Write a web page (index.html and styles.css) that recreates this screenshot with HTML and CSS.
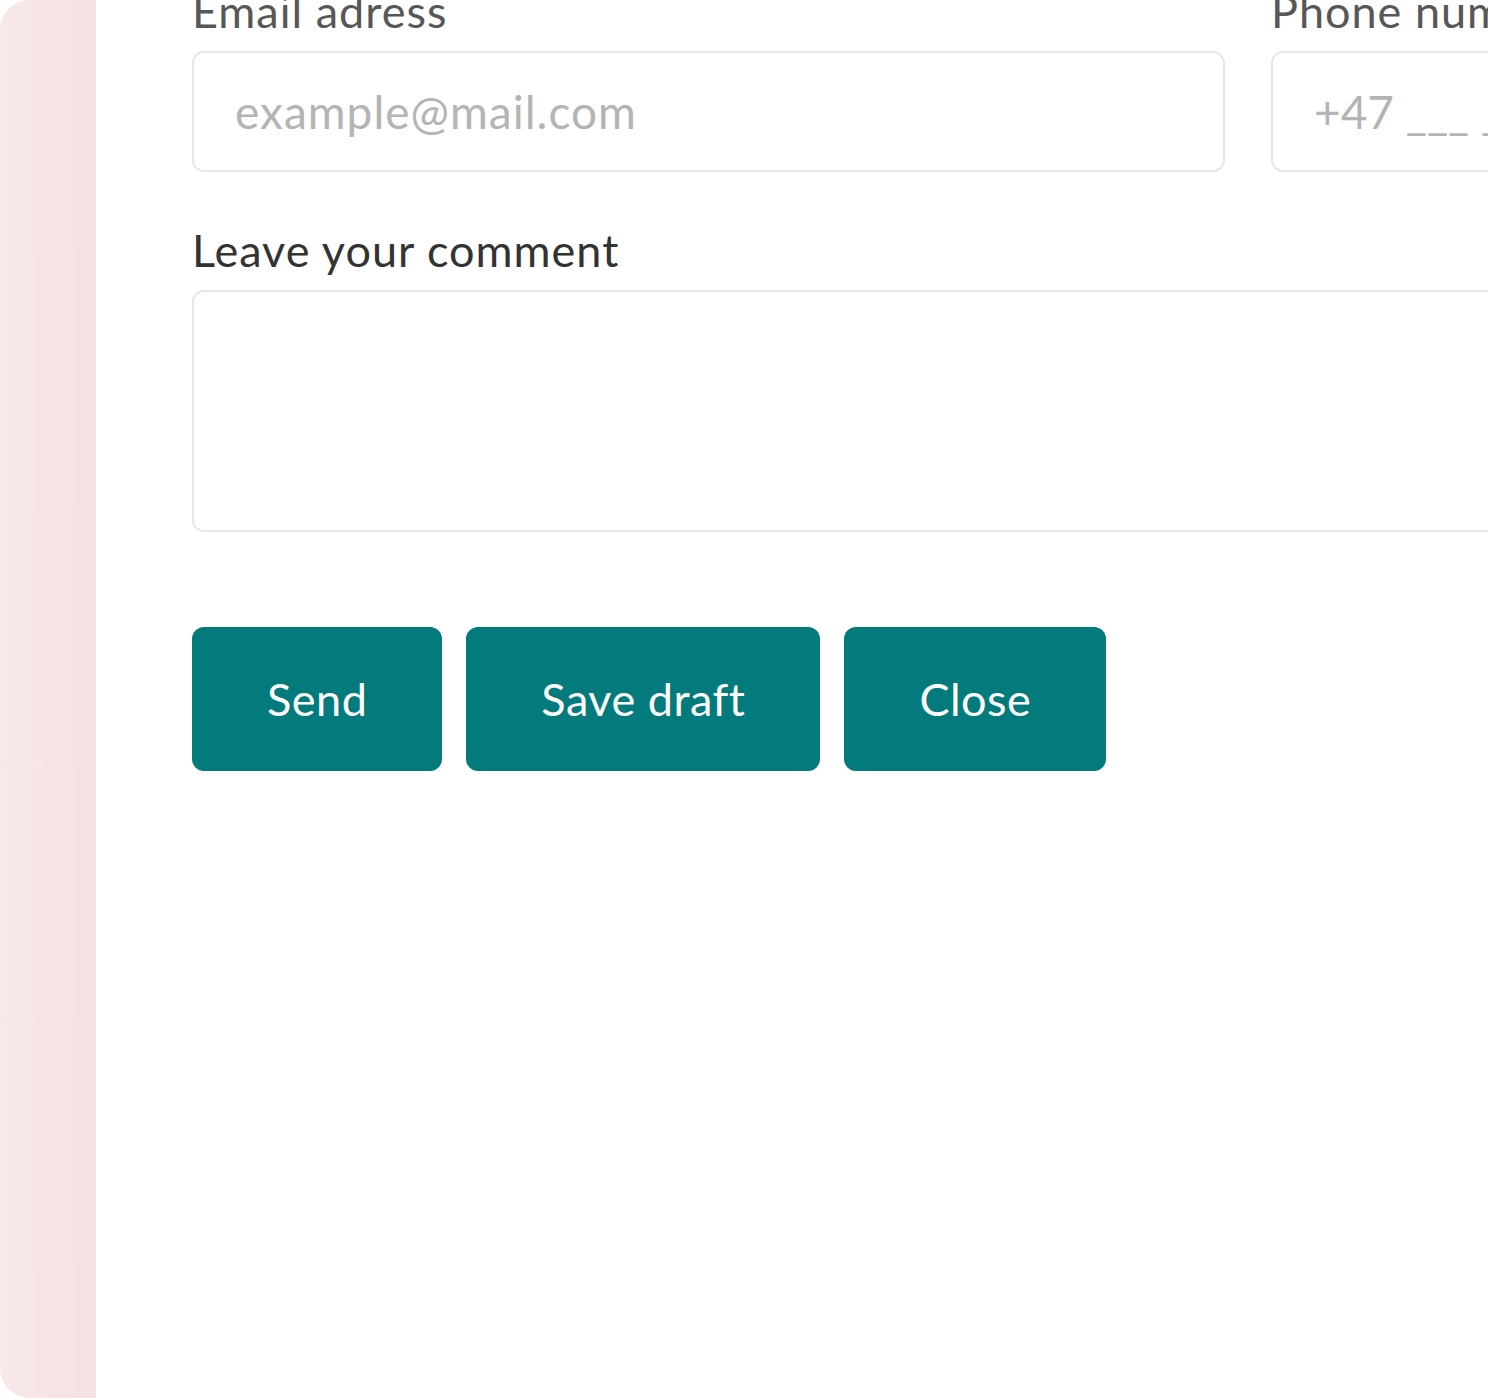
FILE: index.html
```html
<!DOCTYPE html>
<html lang="en">
<head>
<meta charset="utf-8">
<title>Contact form</title>
<link rel="stylesheet" href="styles.css">
</head>
<body>
<div class="page">
  <aside class="sidebar"></aside>
  <main class="main">
    <form class="form">
      <div class="row">
        <div class="field field-email">
          <label class="label label-muted" for="email">Email adress</label>
          <input class="input" id="email" type="text" placeholder="example@mail.com">
        </div>
        <div class="field field-phone">
          <label class="label label-muted" for="phone">Phone number</label>
          <input class="input input-phone" id="phone" type="text" placeholder="+47 ___ __ ___">
        </div>
      </div>
      <div class="field field-comment">
        <label class="label" for="comment">Leave your comment</label>
        <textarea class="textarea" id="comment"></textarea>
      </div>
      <div class="actions">
        <button type="button" class="btn">Send</button>
        <button type="button" class="btn">Save draft</button>
        <button type="button" class="btn">Close</button>
      </div>
    </form>
  </main>
</div>
</body>
</html>
```

FILE: styles.css
```css
html, body {
  margin: 0;
  padding: 0;
  background: #ffffff;
  overflow: hidden;
}

.page {
  display: flex;
  height: 1398px;
  width: 1488px;
  overflow: hidden;
  font-family: Lato, "Open Sans", sans-serif;
}

.sidebar {
  flex: 0 0 96px;
  border-radius: 30px 0 0 30px;
  background: linear-gradient(to right, #f8e8e8, #f5e1e2);
}

.main {
  flex: 1 1 auto;
  min-width: 0;
  padding-left: 96px;
  overflow: hidden;
}

.form {
  width: 1700px;
  margin-top: -13px;
  display: flex;
  flex-direction: column;
}

.row {
  display: flex;
  gap: 46px;
}

.field {
  display: flex;
  flex-direction: column;
  gap: 16px;
}

.field-email {
  flex: 0 0 1033px;
}

.field-phone {
  flex: 0 0 500px;
}

.field-comment {
  margin-top: 54px;
  width: 1600px;
}

.label {
  font-size: 45px;
  line-height: 48px;
  letter-spacing: 1px;
  color: #333333;
  white-space: nowrap;
}

.label-muted {
  color: #575757;
}

.input,
.textarea {
  box-sizing: border-box;
  border: 2px solid #e5e8e8;
  border-radius: 12px;
  background: #ffffff;
  font-family: inherit;
  outline: none;
  margin: 0;
}

.input {
  height: 121px;
  padding: 0 41px;
  font-size: 46px;
  letter-spacing: 1px;
  color: #333333;
}

.input-phone {
  letter-spacing: 0;
}

.input::placeholder {
  color: #b4b4b4;
  opacity: 1;
}

.textarea {
  height: 242px;
  resize: none;
  width: 100%;
}

.actions {
  display: flex;
  gap: 24px;
  margin-top: 95px;
}

.btn {
  height: 144px;
  padding: 0 75px;
  border: none;
  border-radius: 12px;
  background: #037a7b;
  color: #ffffff;
  font-family: inherit;
  font-size: 45px;
  letter-spacing: 0.5px;
  cursor: pointer;
}
```
